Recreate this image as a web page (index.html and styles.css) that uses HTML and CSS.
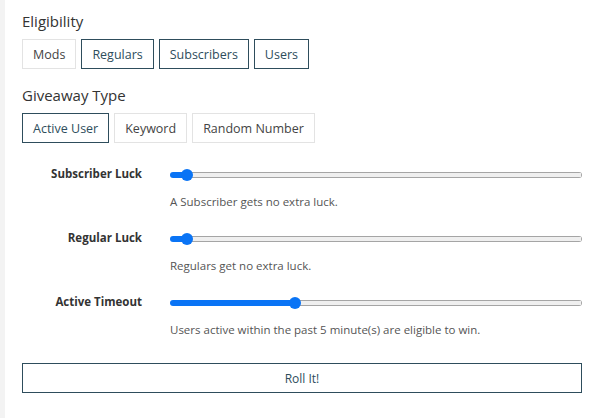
FILE: index.html
```html
<!DOCTYPE html>
<html>
<head>
<meta charset="utf-8">
<link rel="stylesheet" href="styles.css">
</head>
<body>
<div class="page">
  <div class="panel">
    <h3 class="heading">Eligibility</h3>
    <div class="btn-group">
      <button class="btn">Mods</button>
      <button class="btn on">Regulars</button>
      <button class="btn on">Subscribers</button>
      <button class="btn on">Users</button>
    </div>
    <h3 class="heading">Giveaway Type</h3>
    <div class="btn-group">
      <button class="btn on">Active User</button>
      <button class="btn">Keyword</button>
      <button class="btn">Random Number</button>
    </div>
    <div class="form">
      <label class="label">Subscriber Luck</label>
      <div class="control">
        <input type="range" class="range" min="0" max="400" value="11" style="--p: 17px">
        <p class="help">A Subscriber gets no extra luck.</p>
      </div>
      <label class="label">Regular Luck</label>
      <div class="control">
        <input type="range" class="range" min="0" max="400" value="11" style="--p: 17px">
        <p class="help">Regulars get no extra luck.</p>
      </div>
      <label class="label">Active Timeout</label>
      <div class="control">
        <input type="range" class="range" min="0" max="400" value="119" style="--p: 125px">
        <p class="help">Users active within the past 5 minute(s) are eligible to win.</p>
      </div>
    </div>
    <button class="roll">Roll It!</button>
  </div>
</div>
</body>
</html>
```
FILE: styles.css
```css
html, body {
  margin: 0;
  padding: 0;
  background: #ffffff;
}
body {
  font-family: "Open Sans", "Segoe UI", sans-serif;
  color: #333;
}
.page {
  display: flex;
  min-height: 418px;
}
.page::before {
  content: "";
  width: 5px;
  background: #f3f3f3;
  flex: none;
}
.panel {
  flex: 1;
  padding: 10px 18px 0 17px;
  display: flex;
  flex-direction: column;
}
.heading {
  margin: 0 0 7px;
  font-size: 15px;
  font-weight: 400;
  color: #333;
  line-height: 22px;
}
.btn-group {
  display: flex;
  gap: 5px;
  margin-bottom: 15px;
}
.btn {
  font-family: inherit;
  font-size: 12.5px;
  color: #444;
  background: #fff;
  border: 1px solid #e3e3e3;
  padding: 0 10px;
  height: 30px;
  border-radius: 0;
}
.btn.on {
  border-color: #2e4d5c;
  color: #2e4d5c;
}
.form {
  display: grid;
  grid-template-columns: 120px 1fr;
  column-gap: 28px;
  row-gap: 19px;
  margin-top: 7px;
}
.label {
  font-size: 11.5px;
  font-weight: 700;
  color: #333;
  text-align: right;
  line-height: 18px;
}
.control {
  display: flex;
  flex-direction: column;
}
.range {
  -webkit-appearance: none;
  appearance: none;
  margin: 0;
  width: 412px;
  height: 20px;
  background: transparent;
}
.range::-webkit-slider-runnable-track {
  height: 6px;
  border-radius: 3px;
  background:
    linear-gradient(#0a74f5, #0a74f5) left / var(--p) 100% no-repeat,
    linear-gradient(#efefef, #efefef) center / calc(100% - 2px) calc(100% - 2px) no-repeat,
    #a5a5a5;
}
.range::-webkit-slider-thumb {
  -webkit-appearance: none;
  appearance: none;
  width: 12px;
  height: 12px;
  border-radius: 50%;
  background: #0a74f5;
  margin-top: -3px;
}
.help {
  margin: 9px 0 0;
  font-size: 11.5px;
  color: #555;
  line-height: 16px;
}
.roll {
  margin-top: 25px;
  height: 30px;
  font-family: inherit;
  font-size: 12px;
  color: #2e4d5c;
  background: #fff;
  border: 1px solid #2e4d5c;
  border-radius: 0;
}
```
